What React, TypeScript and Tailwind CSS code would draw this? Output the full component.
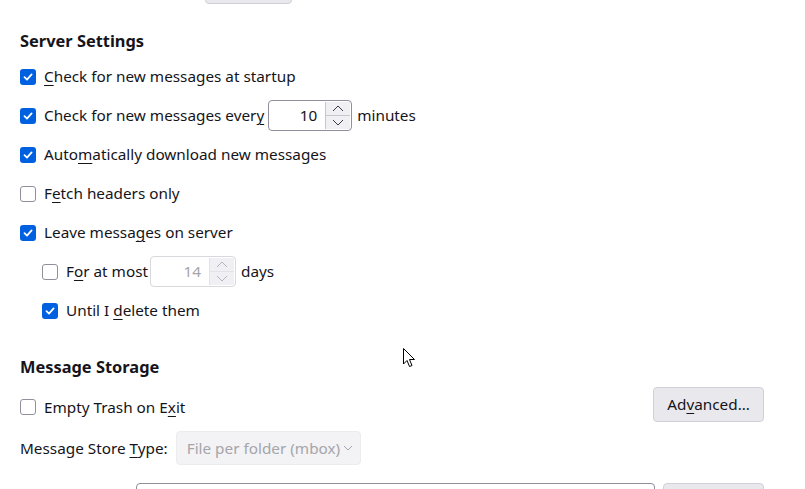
import React from "react";

const Check = ({ checked }: { checked: boolean }) =>
  checked ? (
    <span className="flex h-4 w-4 shrink-0 items-center justify-center rounded-[3px] bg-[#0061e0]">
      <svg width="12" height="12" viewBox="0 0 12 12">
        <path d="M2.5 6.2 L5 8.6 L9.6 3.4" fill="none" stroke="white" strokeWidth="1.8" strokeLinecap="round" strokeLinejoin="round" />
      </svg>
    </span>
  ) : (
    <span className="h-4 w-4 shrink-0 rounded-[3px] border border-[#8f8f9d] bg-white" />
  );

const U = ({ children }: { children: React.ReactNode }) => <span className="underline underline-offset-[3px] decoration-1">{children}</span>;

const Spin = ({ value, disabled, w }: { value: string; disabled?: boolean; w: string }) => (
  <div className={`flex h-[31px] ${w} items-stretch rounded-[4px] border ${disabled ? "border-[#d8d8dd] text-[#a5a5ab]" : "border-[#8f8f9d] text-[#15141a]"} bg-white`}>
    <div className="flex flex-1 items-center justify-end pr-[8px]">{value}</div>
    <div className={`my-[1px] mr-[1px] flex w-[25px] flex-col border-l ${disabled ? "border-[#e3e3e6]" : "border-[#c8c8cc]"} bg-[#f0f0f4]`}>
      <div className={`flex flex-1 items-center justify-center border-b ${disabled ? "border-[#e3e3e6]" : "border-[#c8c8cc]"}`}>
        <svg width="12" height="7" viewBox="0 0 12 7"><path d="M1 6 L6 1 L11 6" fill="none" stroke={disabled ? "#b5b5bb" : "#3a3a40"} strokeWidth="1" /></svg>
      </div>
      <div className="flex flex-1 items-center justify-center">
        <svg width="12" height="7" viewBox="0 0 12 7"><path d="M1 1 L6 6 L11 1" fill="none" stroke={disabled ? "#b5b5bb" : "#3a3a40"} strokeWidth="1" /></svg>
      </div>
    </div>
  </div>
);

const Row = ({ checked, indent, children }: { checked: boolean; indent?: boolean; children: React.ReactNode }) => (
  <div className={`flex h-[39px] items-center ${indent ? "pl-[22px]" : ""}`}>
    <Check checked={checked} />
    <div className="ml-[8px] flex items-center">{children}</div>
  </div>
);

export default function App() {
  return (
    <div
      className="relative h-[489px] w-[805px] overflow-hidden bg-white text-[15.3px] text-[#15141a]"
      style={{ fontFamily: '"Noto Sans", "Open Sans", sans-serif' }}
    >
      <div className="pl-[20px] pr-[41px]">
        <div className="ml-[185px] mt-[-28px] h-[32px] w-[87px] rounded-[4px] border border-[#cfcfd8] bg-[#e9e9ed]" />
        <h2 className="mt-[25px] h-[24px] text-[16.4px] font-bold leading-[24px]">Server Settings</h2>
        <div className="mt-[4px]">
          <Row checked>
            <span><U>C</U>heck for new messages at startup</span>
          </Row>
          <Row checked>
            <span>Check for new messages ever<U>y</U></span>
            <div className="ml-[4px]"><Spin value="10" w="w-[84px]" /></div>
            <span className="ml-[5px]">minutes</span>
          </Row>
          <Row checked>
            <span>Auto<U>m</U>atically download new messages</span>
          </Row>
          <Row checked={false}>
            <span>F<U>e</U>tch headers only</span>
          </Row>
          <Row checked>
            <span>Leave messa<U>g</U>es on server</span>
          </Row>
          <Row checked={false} indent>
            <span>F<U>o</U>r at most</span>
            <div className="ml-[2px]"><Spin value="14" w="w-[86px]" disabled /></div>
            <span className="ml-[5px]">days</span>
          </Row>
          <Row checked indent>
            <span>Until I <U>d</U>elete them</span>
          </Row>
        </div>
        <h2 className="mt-[25px] h-[24px] text-[16.4px] font-bold leading-[24px]">Message Storage</h2>
        <div className="mt-[7px] flex h-[37px] items-center justify-between">
          <div className="mt-[5px] flex items-center">
            <Check checked={false} />
            <span className="ml-[8px]">Empty Trash on E<U>x</U>it</span>
          </div>
          <button className="h-[35px] w-[111px] rounded-[4px] border border-[#cfcfd8] bg-[#e9e9ed] text-[15.3px]">
            Ad<U>v</U>anced…
          </button>
        </div>
        <div className="mt-[8px] flex h-[34px] items-center">
          <span>Message Store <U>T</U>ype:</span>
          <div className="ml-[8px] flex h-[34px] w-[185px] items-center rounded-[4px] border border-[#ececef] bg-[#f3f3f5] pl-[10px] text-[#a5a5ab]">
            File per folder (mbox)
            <svg className="ml-[3px]" width="10" height="6" viewBox="0 0 10 6"><path d="M1 1 L5 5 L9 1" fill="none" stroke="#a5a5ab" strokeWidth="1" /></svg>
          </div>
        </div>
        <div className="mt-[18px] flex">
          <div className="ml-[116px] h-[32px] w-[519px] rounded-[4px] border border-[#8f8f9d] bg-white" />
          <div className="ml-[8px] h-[32px] w-[101px] rounded-[4px] border border-[#cfcfd8] bg-[#e9e9ed]" />
        </div>
      </div>
      <svg className="absolute left-[403px] top-[348px]" width="13" height="21" viewBox="0 0 13 21">
        <path d="M0.5 0.5 L0.5 16 L4 12.5 L6.5 18.5 L9 17.5 L6.5 11.5 L11.5 11.5 Z" fill="white" stroke="black" strokeWidth="1" strokeLinejoin="round" />
      </svg>
    </div>
  );
}
